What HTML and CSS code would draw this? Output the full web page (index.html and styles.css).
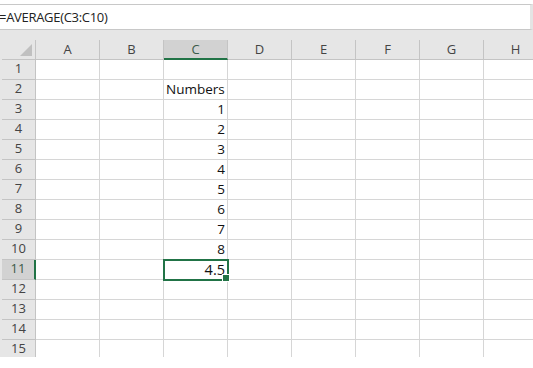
FILE: index.html
```html
<!DOCTYPE html>
<html lang="en">

<head>
    <meta charset="UTF-8">
    <meta name="viewport" content="width=device-width, initial-scale=1.0">
    <title>Average</title>
    <link rel="stylesheet" href="styles.css">
</head>

<body>
    <div class="formula-bar">
        <span class="formula">=AVERAGE(C3:C10)</span>
    </div>

    <div class="sheet">
        <div class="grid">
            <div class="corner"><span class="corner-tri"></span></div>
            <div class="col-head">A</div>
            <div class="col-head">B</div>
            <div class="col-head active">C</div>
            <div class="col-head">D</div>
            <div class="col-head">E</div>
            <div class="col-head">F</div>
            <div class="col-head">G</div>
            <div class="col-head">H</div>

            <div class="row-head">1</div>
            <div class="cell"></div><div class="cell"></div><div class="cell"></div><div class="cell"></div>
            <div class="cell"></div><div class="cell"></div><div class="cell"></div><div class="cell"></div>

            <div class="row-head">2</div>
            <div class="cell"></div><div class="cell"></div><div class="cell text">Numbers</div><div class="cell"></div>
            <div class="cell"></div><div class="cell"></div><div class="cell"></div><div class="cell"></div>

            <div class="row-head">3</div>
            <div class="cell"></div><div class="cell"></div><div class="cell num">1</div><div class="cell"></div>
            <div class="cell"></div><div class="cell"></div><div class="cell"></div><div class="cell"></div>

            <div class="row-head">4</div>
            <div class="cell"></div><div class="cell"></div><div class="cell num">2</div><div class="cell"></div>
            <div class="cell"></div><div class="cell"></div><div class="cell"></div><div class="cell"></div>

            <div class="row-head">5</div>
            <div class="cell"></div><div class="cell"></div><div class="cell num">3</div><div class="cell"></div>
            <div class="cell"></div><div class="cell"></div><div class="cell"></div><div class="cell"></div>

            <div class="row-head">6</div>
            <div class="cell"></div><div class="cell"></div><div class="cell num">4</div><div class="cell"></div>
            <div class="cell"></div><div class="cell"></div><div class="cell"></div><div class="cell"></div>

            <div class="row-head">7</div>
            <div class="cell"></div><div class="cell"></div><div class="cell num">5</div><div class="cell"></div>
            <div class="cell"></div><div class="cell"></div><div class="cell"></div><div class="cell"></div>

            <div class="row-head">8</div>
            <div class="cell"></div><div class="cell"></div><div class="cell num">6</div><div class="cell"></div>
            <div class="cell"></div><div class="cell"></div><div class="cell"></div><div class="cell"></div>

            <div class="row-head">9</div>
            <div class="cell"></div><div class="cell"></div><div class="cell num">7</div><div class="cell"></div>
            <div class="cell"></div><div class="cell"></div><div class="cell"></div><div class="cell"></div>

            <div class="row-head">10</div>
            <div class="cell"></div><div class="cell"></div><div class="cell num">8</div><div class="cell"></div>
            <div class="cell"></div><div class="cell"></div><div class="cell"></div><div class="cell"></div>

            <div class="row-head active">11</div>
            <div class="cell"></div><div class="cell"></div><div class="cell num selected">4.5</div><div class="cell"></div>
            <div class="cell"></div><div class="cell"></div><div class="cell"></div><div class="cell"></div>

            <div class="row-head">12</div>
            <div class="cell"></div><div class="cell"></div><div class="cell"></div><div class="cell"></div>
            <div class="cell"></div><div class="cell"></div><div class="cell"></div><div class="cell"></div>

            <div class="row-head">13</div>
            <div class="cell"></div><div class="cell"></div><div class="cell"></div><div class="cell"></div>
            <div class="cell"></div><div class="cell"></div><div class="cell"></div><div class="cell"></div>

            <div class="row-head">14</div>
            <div class="cell"></div><div class="cell"></div><div class="cell"></div><div class="cell"></div>
            <div class="cell"></div><div class="cell"></div><div class="cell"></div><div class="cell"></div>

            <div class="row-head">15</div>
            <div class="cell"></div><div class="cell"></div><div class="cell"></div><div class="cell"></div>
            <div class="cell"></div><div class="cell"></div><div class="cell"></div><div class="cell"></div>
        </div>
    </div>
</body>

</html>
```

FILE: styles.css
```css
* {
    margin: 0;
    padding: 0;
    box-sizing: border-box;
}

body {
    width: 533px;
    height: 368px;
    overflow: hidden;
    background: #fff;
    font-family: "Open Sans", "Noto Sans", sans-serif;
    color: #222;
}

/* formula bar */
.formula-bar {
    margin-top: 4px;
    height: 26px;
    border-top: 1px solid #c8c8c8;
    border-bottom: 1px solid #c8c8c8;
    border-right: 3px solid #e4e4e4;
    display: flex;
    align-items: center;
    overflow: hidden;
}

.formula {
    margin-left: -1px;
    font-size: 13px;
    letter-spacing: -0.3px;
    color: #222;
    white-space: nowrap;
}

/* sheet */
.sheet {
    height: 327px;
    overflow: hidden;
    background: #e6e6e6;
    padding-top: 10px;
    padding-left: 2px;
}

.grid {
    display: grid;
    grid-template-columns: 34px repeat(8, 64px);
    grid-auto-rows: 20px;
    background: #fff;
}

.corner {
    background: #e6e6e6;
    border-right: 1px solid #c4c4c4;
    border-bottom: 1px solid #c4c4c4;
    position: relative;
}

.corner-tri {
    position: absolute;
    right: 3px;
    bottom: 3px;
    width: 12px;
    height: 12px;
    background: #c0c0c0;
    clip-path: polygon(100% 0, 100% 100%, 0 100%);
}

.col-head {
    background: #e6e6e6;
    border-right: 1px solid #c4c4c4;
    border-bottom: 1px solid #c4c4c4;
    font-size: 13px;
    color: #444;
    text-align: center;
    line-height: 19px;
}

.col-head.active {
    background: #d2d2d2;
    color: #3b5a49;
    border-bottom: 2px solid #217346;
}

.row-head {
    background: #e6e6e6;
    border-right: 1px solid #c4c4c4;
    border-bottom: 1px solid #c4c4c4;
    font-size: 13px;
    color: #444;
    text-align: center;
    line-height: 16px;
}

.row-head.active {
    background: #d2d2d2;
    color: #3b5a49;
    border-right: 2px solid #217346;
}

.cell {
    border-right: 1px solid #d6d6d6;
    border-bottom: 1px solid #d6d6d6;
    font-size: 13.5px;
    line-height: 19px;
    padding: 0 2px;
    white-space: nowrap;
    color: #111;
}

.cell.num {
    text-align: right;
}

.cell.selected {
    position: relative;
    font-size: 14.5px;
    outline: 2px solid #217346;
    outline-offset: -1px;
}

.cell.selected::after {
    content: "";
    position: absolute;
    right: -3px;
    bottom: -3px;
    width: 6px;
    height: 6px;
    background: #217346;
    border: 1px solid #fff;
}
```
